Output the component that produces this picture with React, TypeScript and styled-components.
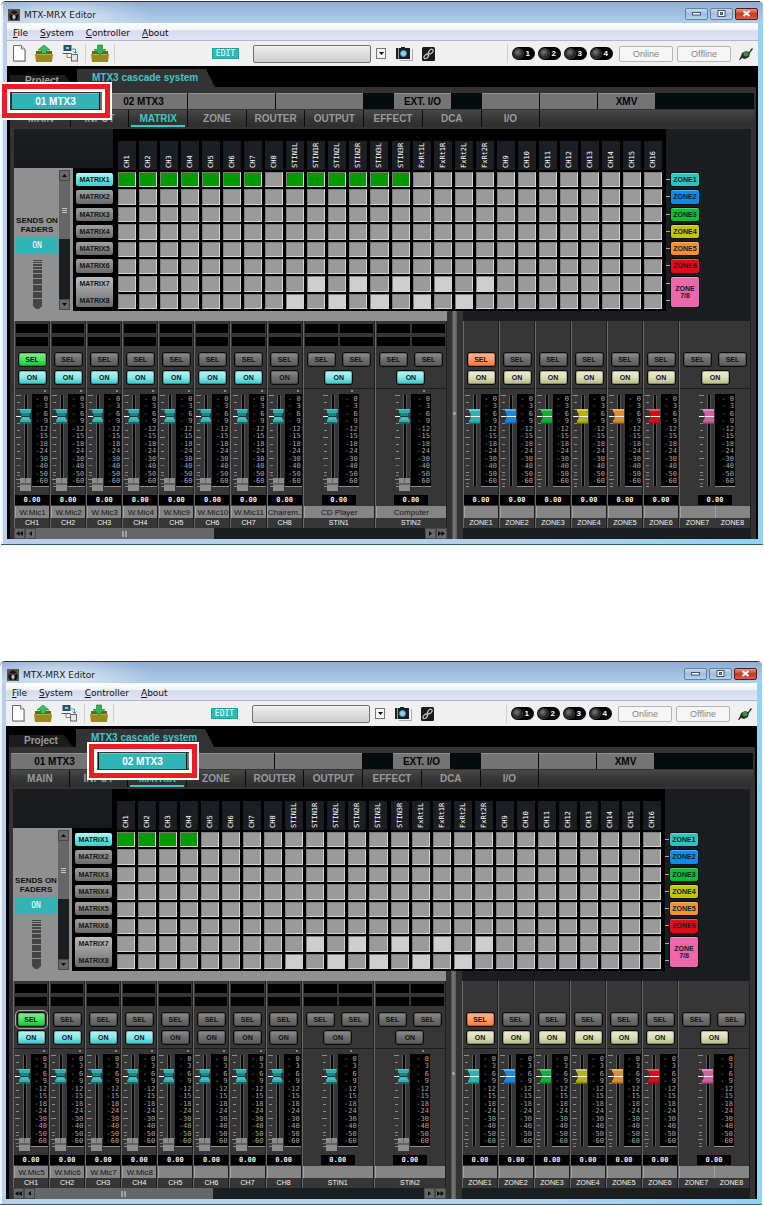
import React from "react";
import styled, { createGlobalStyle, css } from "styled-components";

const GlobalStyle = createGlobalStyle`
  * { box-sizing: border-box; }
  body { margin: 0; background: #fff; font-family: "Liberation Sans", Arial, sans-serif; }
  button { font-family: inherit; padding: 0; border: 0; margin: 0; cursor: pointer; }
`;

const sans = `"Liberation Sans", Arial, sans-serif`;
const mono = `"DejaVu Sans Mono", monospace`;
const ui = `"DejaVu Sans", Verdana, sans-serif`;
const teal = "#33b4b4";
const dark = "#1a1e20";
const gray = "#909090";

/* ---------- page and window frame ---------- */

const Page = styled.main`
  display: flex;
  flex-direction: column;
  gap: 116px;
  padding-top: 1px;
`;

const Frame = styled.section<{ $shift: boolean }>`
  margin: ${(p) => (p.$shift ? "0 2px 0 0" : "0 1px")};
  padding: 0 5px 5px 6px;
  border-top: 1px solid #30303c;
  border-bottom: 1px solid #2c6070;
  border-radius: 5px 5px 0 0;
  background: linear-gradient(90deg, #eef3fa 0, #eef3fa 2px, #b9cee8 2px, #b6d0ec 70%, #8fd4f2 100%);
`;

const TitleBar = styled.header`
  display: flex;
  align-items: center;
  height: 21px;
  margin: 0 -4px;
  padding: 4px 4px 0 5px;
  background:
    radial-gradient(ellipse 90px 22px at 60px 14px, rgba(255, 255, 255, 0.6), rgba(255, 255, 255, 0)),
    linear-gradient(#90aed3, #b0cdea);
  font: 9px/12px ${ui};
  color: #16202c;
`;

const AppTitle = styled.h1`
  flex: 1;
  margin: 0 0 0 4px;
  font: inherit;
`;

const WindowButtons = styled.div`
  display: flex;
  gap: 2px;
  padding-bottom: 2px;
`;

const WindowButton = styled.button<{ $close?: boolean }>`
  display: grid;
  place-items: center;
  width: 23px;
  height: 12px;
  border: 1px solid ${(p) => (p.$close ? "#5d1a14" : "#64809f")};
  border-radius: 2px;
  background: ${(p) =>
    p.$close ? "linear-gradient(#e09a8c, #c33b20 50%, #d6604a)" : "linear-gradient(#c6d9ee, #9fbcdc 50%, #b8d0ea)"};
`;

const MenuBar = styled.nav`
  display: flex;
  gap: 12px;
  height: 18px;
  padding: 2px 6px 0;
  border-bottom: 1px solid #b4b4c4;
  background: linear-gradient(#fff 0, #f0f3fb 40%, #d6dbf0 45%, #e0e4f5);
`;

const MenuItem = styled.button`
  background: none;
  font: 9px/12px ${ui};
  color: #111;
  &::first-letter { text-decoration: underline; }
`;

/* ---------- toolbar ---------- */

const Toolbar = styled.div`
  display: flex;
  align-items: center;
  height: 25px;
  padding: 0 5px 0 6px;
  background: #f0f0f0;
`;

const ToolGroup = styled.div<{ $gap: number; $pad?: number }>`
  display: flex;
  align-items: center;
  gap: ${(p) => p.$gap}px;
  padding-left: ${(p) => p.$pad ?? 0}px;
`;

const ToolButton = styled.button`
  display: block;
  background: none;
  svg { display: block; }
`;

const Separator = styled.span`
  width: 1px;
  height: 19px;
  background: #d0d0d0;
`;

const EditBadge = styled.span`
  width: 27px;
  height: 11px;
  margin-left: 97px;
  border: 1px dotted #0d8a8a;
  background: #2fb9b9;
  color: #fff;
  font: 8px/9px ${mono};
  text-align: center;
`;

const Preset = styled.select`
  appearance: none;
  width: 118px;
  height: 18px;
  margin-left: 14px;
  border: 1px solid #707070;
  border-radius: 2px;
  background: linear-gradient(#f2f2f2, #dcdcdc 50%, #cfcfcf);
`;

const DropButton = styled.button`
  display: grid;
  place-items: center;
  width: 10px;
  height: 11px;
  margin: 0 10px 0 5px;
  border: 1px solid #777;
  background: #f4f4f4;
`;

const Spacer = styled.span`
  flex: 1;
`;

const Led = styled.span`
  display: flex;
  align-items: center;
  justify-content: space-between;
  width: 23px;
  height: 13px;
  padding: 0 5px 0 2px;
  border-radius: 7px;
  background: #000;
  color: #fff;
  font: bold 8px/13px ${sans};
  &::before {
    content: "";
    width: 9px;
    height: 9px;
    border-radius: 50%;
    background: radial-gradient(circle at 40% 35%, #777, #222 70%);
    box-shadow: 0 0 0 1px #3a3a3a;
  }
`;

const LineButton = styled.button`
  width: 54px;
  height: 16px;
  border: 1px solid #b4b4b4;
  border-radius: 2px;
  background: #f6f6f6;
  color: #858585;
  font: 9px/14px ${sans};
`;

/* ---------- tabs ---------- */

const Body = styled.div`
  background: #000;
`;

const TabBar = styled.div`
  display: flex;
  align-items: flex-end;
  gap: 3px;
  height: 21px;
  padding-left: 3px;
`;

const Tab = styled.button<{ $active?: boolean }>`
  width: ${(p) => (p.$active ? 138 : 64)}px;
  height: ${(p) => (p.$active ? 18 : 12)}px;
  padding: 0 0 0 15px;
  text-align: left;
  white-space: nowrap;
  background: ${(p) => (p.$active ? "#333" : "#1c1c1c")};
  clip-path: polygon(0 0, calc(100% - 9px) 0, 100% 100%, 0 100%);
  color: ${(p) => (p.$active ? "#3cc8c4" : "#9a9a9a")};
  font: bold 10px/12px ${sans};
`;

const Panel = styled.div`
  margin: 0 2px 0 3px;
  padding-top: 6px;
  background: #333;
`;

const DeviceRow = styled.div`
  display: grid;
  grid-template-columns: repeat(4, 87fr) 29fr 57fr 29fr repeat(3, 57fr) 98fr;
  gap: 1px;
  height: 16px;
  margin: 0 2px 1px;
  background: #060b0b;
`;

const Device = styled.button<{ $active?: boolean }>`
  position: relative;
  border-top: 1px solid ${(p) => (p.$active ? "#5fd0d0" : "#909090")};
  background: ${(p) => (p.$active ? teal : "#747474")};
  color: ${(p) => (p.$active ? "#fff" : "#050505")};
  font: bold 10px/15px ${sans};
`;

const Callout = styled.span`
  position: absolute;
  z-index: 2;
  inset: -10px -11px -9px -10px;
  border: 5px solid #ec1c24;
  box-shadow: 0 0 0 2px #fff, inset 0 0 0 3px #fff;
`;

const NavRow = styled.nav`
  display: grid;
  grid-template-columns: repeat(9, 27fr) 100fr;
  gap: 1px;
  height: 17px;
  margin: 0 2px 2px;
  background: #0c0c0c;
`;

const NavItem = styled.button<{ $active?: boolean }>`
  display: flex;
  flex-direction: column;
  align-items: center;
  justify-content: space-between;
  background: linear-gradient(#484848, #343434 60%, #2e2e2e);
  color: ${(p) => (p.$active ? "#3cc8c4" : "#999")};
  font: bold 10px/17px ${sans};
  &::after {
    content: "";
    width: calc(100% - 4px);
    height: 2px;
    margin-top: -2px;
    background: ${(p) => (p.$active ? "#3cc8c4" : "transparent")};
  }
`;

/* ---------- matrix ---------- */

const Workspace = styled.div`
  margin: 0 5px 0 4px;
`;

const MatrixArea = styled.div`
  display: grid;
  grid-template-columns: 59px 41px minmax(0, 1fr) 85px;
  grid-template-rows: 39px 143px;
  background: ${dark};
`;

const Corner = styled.div`
  grid-column: 1 / 3;
  border-right: 1px solid #000;
  background: linear-gradient(${dark}, #171a1d);
`;

const SideBox = styled.aside`
  grid-area: 2 / 1;
  display: flex;
  background: ${gray};
`;

const SideMain = styled.div`
  flex: 1;
  display: flex;
  flex-direction: column;
  align-items: center;
  padding: 48px 0 0 1px;
  font: bold 8px/9px ${sans};
  text-align: center;
  white-space: nowrap;
  color: #111;
`;

const SendsOn = styled.button`
  width: 42px;
  height: 17px;
  margin: 3px 0 6px;
  background: ${teal};
  color: #fff;
  font: 8px/17px ${mono};
`;

const VScroll = styled.div`
  display: flex;
  flex-direction: column;
  width: 11px;
  margin: 2px 3px 1px 0;
  background: ${dark};
`;

const ArrowButton = styled.button`
  display: grid;
  place-items: center;
  width: 11px;
  height: 11px;
  border: 1px solid #484848;
  background: #686868;
`;

const VThumb = styled.div`
  display: grid;
  place-items: center;
  height: 58px;
  background: #666;
`;

const LabelColumn = styled.div`
  grid-area: 2 / 2;
  display: grid;
  grid-template-rows: repeat(8, minmax(0, 1fr));
  gap: 4px;
  padding: 5px 1px 4px 3px;
  background: #000;
`;

const MatrixLabel = styled.button<{ $active?: boolean; $double?: boolean }>`
  display: flex;
  flex-direction: column;
  justify-content: space-between;
  align-items: center;
  border-radius: 2px;
  background: ${(p) =>
    p.$active ? "linear-gradient(#b8f6f6, #58dede 60%, #48cccc)" : "linear-gradient(#a0a0a0, #6a6a6a)"};
  ${(p) => p.$double && css`grid-row: span 2; background: linear-gradient(#bcbcbc, #6c6c6c);`}
  color: #161616;
  font: bold 7px/13px ${sans};
`;

const GridColumn = styled.div`
  grid-area: 1 / 3 / 3 / 4;
  padding: 12px 4px 2px;
  background: #000;
`;

const HeaderRow = styled.div`
  display: grid;
  grid-template-columns: repeat(26, minmax(0, 1fr));
  gap: 3px;
  height: 29px;
  margin-bottom: 2px;
`;

const HeaderCell = styled.span`
  display: flex;
  align-items: center;
  justify-content: flex-start;
  writing-mode: vertical-rl;
  transform: rotate(180deg);
  padding-top: 2px;
  background: #1b1e22;
  color: #fff;
  font: 7px/9px ${mono};
`;

const Cells = styled.div`
  display: grid;
  grid-template-columns: repeat(26, minmax(0, 1fr));
  grid-template-rows: repeat(8, 1fr);
  gap: 2px 3px;
  height: 137px;
`;

const Cell = styled.button<{ $kind: "on" | "off" | "light" }>`
  border: 1px solid;
  border-color: #7c7c7c #d4d4d4 #d4d4d4 #7c7c7c;
  background: ${(p) => ({ on: "#009a00", off: "#9a9a9a", light: "#cecece" })[p.$kind]};
`;

const ZoneColumn = styled.div`
  grid-area: 2 / 4;
  display: grid;
  grid-template-columns: 5px 28px;
  grid-template-rows: repeat(8, minmax(0, 1fr));
  align-items: center;
  row-gap: 4px;
  padding: 5px 0 4px;
`;

const Lead = styled.span`
  grid-column: 1;
  width: 4px;
  height: 1px;
  background: #aaa;
`;

const ZonePill = styled.button<{ $color: string; $double?: boolean }>`
  grid-column: 2;
  align-self: stretch;
  ${(p) => p.$double && css`grid-row: 7 / 9;`}
  border-radius: 2px;
  background: ${(p) => p.$color};
  box-shadow: inset 0 1px 0 rgba(255, 255, 255, 0.3), 0 0 0 1px #0c0f10;
  color: #10202a;
  font: bold 7px/7px ${sans};
  white-space: pre-line;
`;

/* ---------- channel strips ---------- */

const Mixer = styled.div`
  display: grid;
  grid-template-columns: minmax(0, 433fr) 16px minmax(0, 288fr);
`;

const Side = styled.div<{ $top: string }>`
  border-top: 10px solid ${(p) => p.$top};
`;

const Strips = styled.div<{ $units: number }>`
  display: grid;
  grid-template-columns: repeat(${(p) => p.$units}, minmax(0, 1fr));
`;

const Divider = styled.div`
  display: grid;
  place-items: center;
  margin: 0 6px 0 5px;
  background: linear-gradient(90deg, #4a4a4a, #7a7a7a 40%, #5a5a5a);
  &::before {
    content: "";
    width: 3px;
    height: 3px;
    margin-bottom: 24px;
    border-radius: 50%;
    background: #aaa;
  }
`;

const StripBox = styled.section<{ $wide: boolean }>`
  grid-column: span ${(p) => (p.$wide ? 2 : 1)};
  display: flex;
  flex-direction: column;
  align-items: center;
  border-left: 1px solid #686868;
  border-right: 1px solid #1e1e1e;
  background: #363636;
`;

const Split = styled.div<{ $height: number; $top: number }>`
  display: flex;
  align-items: stretch;
  justify-content: center;
  width: 100%;
  height: ${(p) => p.$height}px;
  margin-top: ${(p) => p.$top}px;
`;

const Half = styled.div`
  flex: 1;
  display: flex;
  flex-direction: column;
  align-items: center;
`;

const MeterBox = styled.div`
  width: calc(100% - 2px);
  height: 9px;
  margin-top: 4px;
  background: #000;
  &:first-child { margin-top: 3px; }
`;

const keyTones = {
  off: "linear-gradient(#8e8e8e, #6c6c6c 50%, #5c5c5c)",
  green: "linear-gradient(#86f08a, #4fe068 50%, #0cc83c)",
  cyan: "linear-gradient(#b4f4f4, #8ce8e8 50%, #30c4c8)",
  orange: "linear-gradient(#ffb48c, #ff9c6c 50%, #f87838)",
  cream: "linear-gradient(#ecedcf, #dcdeb8 50%, #b4ba82)",
};
type Tone = keyof typeof keyTones;

const KeyButton = styled.button<{ $tone: Tone; $framed?: boolean }>`
  width: 29px;
  height: 15px;
  border: 1px solid #0a0a0a;
  border-radius: 3px;
  box-shadow: inset 0 0 0 1px rgba(0, 0, 0, 0.25);
  outline: ${(p) => (p.$framed ? "1px solid #a8a8a8" : "none")};
  outline-offset: 1px;
  background: ${(p) => keyTones[p.$tone]};
  color: #141414;
  font: bold 7px/13px ${sans};
`;

const Rule = styled.hr`
  width: 100%;
  height: 1px;
  margin: 3px 0 0;
  border: 0;
  background: #1c1c1c;
`;

const FaderBox = styled.div`
  display: grid;
  width: 34px;
  height: 104px;
  & > * { grid-area: 1 / 1; }
`;

const Knob = styled.input<{ $color: string; $waist: boolean }>`
  appearance: none;
  writing-mode: vertical-lr;
  direction: rtl;
  width: 11px;
  height: 104px;
  margin: 0 0 0 5px;
  background: transparent;
  &::-webkit-slider-runnable-track { width: 11px; background: transparent; }
  &::-webkit-slider-thumb {
    appearance: none;
    width: 11px;
    height: 15px;
    background: ${(p) =>
      p.$waist
        ? `linear-gradient(rgba(255,255,255,.25) 0 1px, transparent 1px 4px, rgba(0,0,0,.25) 4px 7px, #0c3c3c 7px 8px, rgba(255,255,255,.15) 8px 11px, transparent 11px 13px, rgba(0,0,0,.4) 13px), ${p.$color}`
        : `linear-gradient(rgba(255,255,255,.3) 0 2px, transparent 2px 7px, #fff 7px 8px, transparent 8px 12px, rgba(0,0,0,.35)), ${p.$color}`};
    clip-path: ${(p) =>
      p.$waist
        ? "polygon(0 0, 100% 0, 100% 24%, 86% 34%, 86% 66%, 100% 76%, 100% 100%, 0 100%, 0 76%, 14% 66%, 14% 34%, 0 24%)"
        : "polygon(0 0, 100% 0, 100% 100%, 0 100%, 0 80%, 14% 68%, 14% 32%, 0 20%)"};
  }
`;

const Scale = styled.div<{ $wide: boolean }>`
  display: flex;
  flex-direction: column;
  justify-content: space-between;
  width: ${(p) => (p.$wide ? 20 : 17)}px;
  height: 93px;
  margin: 5px 0 0 17px;
  padding: 2px 1px 1px 0;
  border-bottom: 1px solid #8a8a8a;
  background: #000;
  color: #a8a8a8;
  font: 7px/7px ${mono};
  text-align: right;
  white-space: pre;
`;

const Value = styled.output`
  width: 34px;
  height: 10px;
  margin-top: 2px;
  background: #000;
  color: #eee;
  font: bold 7px/10px ${mono};
  text-align: center;
`;

const NameBox = styled.span`
  flex: 1;
  height: 12px;
  border-left: 1px solid #a4a4a4;
  background: #858585;
  color: #141414;
  font: 8px/13px ${sans};
  text-align: center;
  white-space: nowrap;
`;

const ChannelName = styled.span`
  flex: 1;
  color: #f4f4f4;
  font: 7px/10px ${sans};
  text-align: center;
`;

const HScroll = styled.div`
  display: flex;
  height: 11px;
  background: ${dark};
`;

const HThumb = styled.div`
  display: grid;
  place-items: center;
  width: 41%;
  background: #666;
`;

/* ---------- drawings ---------- */

const AppIcon = () => (
  <svg width="12" height="12" viewBox="0 0 12 12">
    <rect width="12" height="12" fill="#5a5450" />
    <path d="M6 1l4 2.500-4 2-4-2z" fill="#1a1818" />
    <path d="M1.500 4.500L5 6.500v4.500H3l-1.500-2zM10.500 4.500L7 6.500v4.500h2l1.500-2z" fill="#111" />
    <path d="M4.500 7L6 5.800 7.500 7v2.500h-3z" fill="#c8c4c0" />
  </svg>
);

const NewIcon = () => (
  <svg width="13" height="17" viewBox="0 0 13 17">
    <path d="M.5.500h8l3.500 3.500v12H.5z" fill="#fff" stroke="#666" />
    <path d="M8.500.500V4H12" fill="#e8e8e8" stroke="#777" />
    <path d="M1 16.500h11.500V5" fill="none" stroke="#999" />
  </svg>
);

const FolderIcon = ({ down }: { down?: boolean }) => (
  <svg width="18" height="19" viewBox="0 0 18 19">
    <path d="M1 7h5l1-1h4l1 1h5v10H1z" fill="#6f6410" />
    <path d="M0 10h18l-1 8H1z" fill="#988a1e" />
    <path d="M1 10.500h16" stroke="#b8ab48" />
    {down ? (
      <path d="M6.500 1h5v4.500h3.500L9 11 3 5.500h3.500z" fill="#2db455" stroke="#0e7a30" strokeWidth=".6" />
    ) : (
      <path d="M9 1l6 5h-3.500v3.500h-5V6H3z" fill="#3cc05c" stroke="#0e8036" strokeWidth=".6" />
    )}
  </svg>
);

const NetworkIcon = () => (
  <svg width="17" height="17" viewBox="0 0 17 17">
    <rect x="2" y=".5" width="7" height="5" fill="#1c5c88" stroke="#444" />
    <rect x="4" y="2" width="3" height="2" fill="#6fd0f0" />
    <path d="M.5 8.500h9" stroke="#555" />
    <path d="M10 4h3.500v4M13.500 8.500l-2-2M13.500 8.500l2-2" fill="none" stroke="#30a0b0" />
    <path d="M5 9v3.500h4" fill="none" stroke="#888" />
    <rect x="9.500" y="9.500" width="6" height="6.500" fill="#e4e8e8" stroke="#666" />
  </svg>
);

const CameraIcon = () => (
  <svg width="17" height="14" viewBox="0 0 17 14">
    <path d="M4 13.500h12.500V2" fill="none" stroke="#aaa" />
    <rect y="1" width="14" height="11" fill="#1c1e20" />
    <path d="M2.500 1v11" stroke="#999" />
    <rect x="5" y="0" width="4" height="2" fill="#1c1e20" />
    <circle cx="7.500" cy="6.500" r="3" fill="#8cd0ec" stroke="#3a98c8" />
  </svg>
);

const LinkIcon = () => (
  <svg width="13" height="14" viewBox="0 0 13 14">
    <rect width="13" height="14" rx="1.500" fill="#1a1a1a" />
    <ellipse cx="8.800" cy="4.600" rx="2.800" ry="1.700" transform="rotate(-45 8.800 4.600)" fill="none" stroke="#ccc" strokeWidth="1.100" />
    <ellipse cx="4.300" cy="9.300" rx="2.800" ry="1.700" transform="rotate(-45 4.300 9.300)" fill="none" stroke="#ccc" strokeWidth="1.100" />
    <path d="M5 8.500L8 5.500" stroke="#ccc" />
  </svg>
);

const PlugIcon = () => (
  <svg width="14" height="14" viewBox="0 0 14 14">
    <path d="M0 13l2-4 1-3 4-2 3 1 3-4 1 1-3 4-1 4-4 2-3-1-2 2z" fill="#2c2c2c" />
    <circle cx="7" cy="7" r="2.500" fill="#2f9a2c" />
  </svg>
);

const Arrow = ({ d }: { d: string }) => (
  <svg width="7" height="7" viewBox="0 0 7 7">
    <path d={d} fill="#0a0a0a" />
  </svg>
);

const SendsIcon = () => (
  <svg width="9" height="50" viewBox="0 0 9 50">
    {[
      [0, 1], [2, 1], [4, 2], [7, 2], [10, 3], [14, 4], [19, 5], [25, 6], [32, 6],
    ].map(([y, h]) => (
      <rect key={y} x="0" y={y} width="9" height={h} fill="#444" />
    ))}
    <path d="M0 39h9v7l-3 3H3l-3-3z" fill="#444" />
  </svg>
);

const FaderTicks = ({ rest }: { rest: boolean }) => (
  <svg width="34" height="104" viewBox="0 0 34 104" shapeRendering="crispEdges">
    {Array.from({ length: 14 }, (_, i) => (
      <rect key={i} x={i % 3 === 0 ? 1 : 2} y={6 + i * 7} width={i % 3 === 0 ? 5 : 3} height="1" fill="#8c8c8c" />
    ))}
    {[76, 86, 94].map((y) => (
      <rect key={y} x="2" y={y} width="3" height="1" fill="#777" />
    ))}
    <rect x="9" y="6" width="1" height="91" fill="#5c5c5c" />
    <rect x="10" y="6" width="2" height="91" fill="#060606" />
    <rect x="12" y="6" width="1" height="91" fill="#555" />
    <rect x="1" y="27" width="5" height="1" fill="#fff" />
    {rest && (
      <>
        <rect x="5" y="89" width="11" height="13" fill="#8c8c8c" />
        <rect x="5" y="94" width="11" height="2" fill="#606060" />
        <rect x="10" y="89" width="1" height="5" fill="#666" />
        <circle cx="30" cy="2" r="1" fill="none" stroke="#888" />
      </>
    )}
  </svg>
);

/* ---------- data ---------- */

const sources = [
  "CH1", "CH2", "CH3", "CH4", "CH5", "CH6", "CH7", "CH8",
  "STIN1L", "STIN1R", "STIN2L", "STIN2R", "STIN3L", "STIN3R",
  "FxRt1L", "FxRt1R", "FxRt2L", "FxRt2R",
  "CH9", "CH10", "CH11", "CH12", "CH13", "CH14", "CH15", "CH16",
];
const navItems = ["MAIN", "INPUT", "MATRIX", "ZONE", "ROUTER", "OUTPUT", "EFFECT", "DCA", "I/O"];
const zoneColors = ["#30c4c0", "#0c8cf0", "#08c030", "#c4c40c", "#f89030", "#e00c18", "#ec68a8"];
const knobColors = ["#2cb4b4", "#1888e0", "#10b030", "#b4b40c", "#e08c30", "#d80c1c", "#d060a0"];
const levels = ["- 0", "- 3", "- 6", "- 9", "-12", "-15", "-18", "-24", "-30", "-40", "-50", "-60"];

interface StripData {
  channels: string[];
  names: string[];
  on: Tone;
  sel: Tone;
  framed?: boolean;
}

interface WindowData {
  activeDevice: number;
  activeCells: number[];
  names: string[];
  litStrips: number[];
}

const windows: WindowData[] = [
  {
    activeDevice: 0,
    activeCells: [0, 1, 2, 3, 4, 5, 6, 8, 9, 10, 11, 12, 13],
    names: ["W.Mic1", "W.Mic2", "W.Mic3", "W.Mic4", "W.Mic9", "W.Mic10", "W.Mic11", "Chairem..", "CD Player", "Computer"],
    litStrips: [0, 1, 2, 3, 4, 5, 6, 8, 9],
  },
  {
    activeDevice: 1,
    activeCells: [0, 1, 2, 3],
    names: ["W.Mic5", "W.Mic6", "W.Mic7", "W.Mic8", "", "", "", "", "", ""],
    litStrips: [0, 1, 2, 3],
  },
];

const inputLabels = ["CH1", "CH2", "CH3", "CH4", "CH5", "CH6", "CH7", "CH8", "STIN1", "STIN2"];

const cellKind = (row: number, col: number, active: number[]) => {
  if (row === 0 && active.includes(col)) return "on";
  if (col >= 8 && col < 18 && ((row === 6 && col % 2 === 1) || (row === 7 && col % 2 === 0))) return "light";
  return "off";
};

/* ---------- components ---------- */

const Strip = ({ data, wide, color, zone }: { data: StripData; wide: boolean; color: string; zone?: boolean }) => {
  const halves = wide ? [0, 1] : [0];
  const title = data.channels.join("/");
  return (
    <StripBox $wide={wide} aria-label={title}>
      <Split $height={25} $top={0}>
        {!zone && halves.map((h) => (
          <Half key={h}>
            <MeterBox />
            <MeterBox />
          </Half>
        ))}
      </Split>
      <Split $height={15} $top={6}>
        {halves.map((h) => (
          <Half key={h}>
            <KeyButton $tone={h === 0 ? data.sel : "off"} $framed={data.framed}>SEL</KeyButton>
          </Half>
        ))}
      </Split>
      <Split $height={15} $top={3}>
        <KeyButton $tone={data.on}>ON</KeyButton>
      </Split>
      <Rule />
      <FaderBox>
        <FaderTicks rest={!zone} />
        <Scale $wide={wide}>{levels.map((l) => <span key={l}>{l}</span>)}</Scale>
        <Knob type="range" min={0} max={100} defaultValue={78} aria-label={`${title} level`} $color={color} $waist={!zone} />
      </FaderBox>
      <Value>0.00</Value>
      <Split $height={12} $top={1}>
        {data.names.map((n, i) => <NameBox key={i}>{n}</NameBox>)}
      </Split>
      <Split $height={10} $top={0}>
        {data.channels.map((c) => <ChannelName key={c}>{c}</ChannelName>)}
      </Split>
    </StripBox>
  );
};

const MatrixView = ({ data }: { data: WindowData }) => (
  <MatrixArea>
    <Corner />
    <SideBox>
      <SideMain>
        SENDS ON
        <br />
        FADERS
        <SendsOn>ON</SendsOn>
        <SendsIcon />
      </SideMain>
      <VScroll>
        <ArrowButton aria-label="Scroll up"><Arrow d="M1 5h5L3.500 2z" /></ArrowButton>
        <VThumb>
          <svg width="5" height="5" viewBox="0 0 5 5"><path d="M0 .5h5M0 2.500h5M0 4.500h5" stroke="#c4c4c4" /></svg>
        </VThumb>
        <Spacer />
        <ArrowButton aria-label="Scroll down"><Arrow d="M1 2h5L3.500 5z" /></ArrowButton>
      </VScroll>
    </SideBox>
    <LabelColumn>
      {[1, 2, 3, 4, 5, 6].map((n) => (
        <MatrixLabel key={n} $active={n === 1}>MATRIX{n}</MatrixLabel>
      ))}
      <MatrixLabel $double>
        <span>MATRIX7</span>
        <span>MATRIX8</span>
      </MatrixLabel>
    </LabelColumn>
    <GridColumn>
      <HeaderRow>{sources.map((s) => <HeaderCell key={s}>{s}</HeaderCell>)}</HeaderRow>
      <Cells>
        {Array.from({ length: 8 }, (_, row) =>
          sources.map((s, col) => (
            <Cell key={`${row}${s}`} aria-label={`${s} to MATRIX${row + 1}`} $kind={cellKind(row, col, data.activeCells)} />
          )),
        )}
      </Cells>
    </GridColumn>
    <ZoneColumn>
      {zoneColors.map((c, i) => (
        <React.Fragment key={c}>
          <Lead />
          <ZonePill $color={c} $double={i === 6}>{i === 6 ? "ZONE\n7/8" : `ZONE${i + 1}`}</ZonePill>
        </React.Fragment>
      ))}
      <Lead />
    </ZoneColumn>
  </MatrixArea>
);

const EditorWindow = ({ data, shift }: { data: WindowData; shift: boolean }) => (
  <Frame $shift={shift}>
    <TitleBar>
      <AppIcon />
      <AppTitle>MTX-MRX Editor</AppTitle>
      <WindowButtons>
        <WindowButton aria-label="Minimize">
          <svg width="9" height="4"><rect x=".5" y=".5" width="8" height="2.500" fill="#fff" stroke="#44546a" /></svg>
        </WindowButton>
        <WindowButton aria-label="Maximize">
          <svg width="9" height="7"><rect x="1" y=".5" width="7" height="6" fill="#fff" stroke="#44546a" /><rect x="3.500" y="2.500" width="2" height="2" fill="#8aa" stroke="#44546a" /></svg>
        </WindowButton>
        <WindowButton aria-label="Close" $close>
          <svg width="9" height="7"><path d="M1.500 1l6 5M7.500 1l-6 5" stroke="#fff" strokeWidth="2" /></svg>
        </WindowButton>
      </WindowButtons>
    </TitleBar>
    <MenuBar>
      {["File", "System", "Controller", "About"].map((m) => <MenuItem key={m}>{m}</MenuItem>)}
    </MenuBar>
    <Toolbar>
      <ToolGroup $gap={9}>
        <ToolButton aria-label="New"><NewIcon /></ToolButton>
        <ToolButton aria-label="Open"><FolderIcon /></ToolButton>
        <ToolButton aria-label="Network"><NetworkIcon /></ToolButton>
      </ToolGroup>
      <ToolGroup $gap={5} $pad={6}>
        <Separator />
        <ToolButton aria-label="Save"><FolderIcon down /></ToolButton>
        <Separator />
      </ToolGroup>
      <EditBadge>EDIT</EditBadge>
      <Preset aria-label="Preset"><option></option></Preset>
      <DropButton aria-label="Show presets"><Arrow d="M1 2h5L3.500 5z" /></DropButton>
      <ToolGroup $gap={9}>
        <ToolButton aria-label="Snapshot"><CameraIcon /></ToolButton>
        <ToolButton aria-label="Link"><LinkIcon /></ToolButton>
      </ToolGroup>
      <Spacer />
      <Separator />
      <ToolGroup $gap={3} $pad={4}>
        {[1, 2, 3, 4].map((n) => <Led key={n}>{n}</Led>)}
      </ToolGroup>
      <ToolGroup $gap={4} $pad={6}>
        <LineButton>Online</LineButton>
        <LineButton>Offline</LineButton>
      </ToolGroup>
      <ToolGroup $gap={0} $pad={8}>
        <ToolButton aria-label="Connection"><PlugIcon /></ToolButton>
      </ToolGroup>
    </Toolbar>
    <Body>
      <TabBar>
        <Tab>Project</Tab>
        <Tab $active>MTX3 cascade system</Tab>
      </TabBar>
      <Panel>
        <DeviceRow>
          {["01 MTX3", "02 MTX3", "", ""].map((d, i) => (
            <Device key={i} $active={i === data.activeDevice}>
              {d}
              {i === data.activeDevice && <Callout />}
            </Device>
          ))}
          <span />
          <Device>EXT. I/O</Device>
          <span />
          <Device aria-label="Empty slot" />
          <Device aria-label="Empty slot" />
          <Device>XMV</Device>
        </DeviceRow>
        <NavRow>
          {navItems.map((n) => <NavItem key={n} $active={n === "MATRIX"}>{n}</NavItem>)}
          <NavItem as="span" />
        </NavRow>
        <Workspace>
          <MatrixView data={data} />
          <Mixer>
            <Side $top={gray}>
              <Strips $units={12}>
                {inputLabels.map((c, i) => (
                  <Strip
                    key={c}
                    wide={i > 7}
                    color="#2ab0b0"
                    data={{
                      channels: [c],
                      names: [data.names[i]],
                      on: data.litStrips.includes(i) ? "cyan" : "off",
                      sel: i === 0 ? "green" : "off",
                      framed: shift && i === 0,
                    }}
                  />
                ))}
              </Strips>
              <HScroll>
                <ArrowButton aria-label="First"><Arrow d="M3.500 1v5L0 3.500zM7 1v5L3.500 3.500z" /></ArrowButton>
                <ArrowButton aria-label="Left"><Arrow d="M5 1v5L2 3.500z" /></ArrowButton>
                <HThumb>
                  <svg width="5" height="6" viewBox="0 0 5 6"><path d="M1 0v6M4 0v6" stroke="#ddd" /></svg>
                </HThumb>
                <Spacer />
                <ArrowButton aria-label="Right"><Arrow d="M2 1v5l3-2.500z" /></ArrowButton>
                <ArrowButton aria-label="Last"><Arrow d="M0 1v5l3.500-2.500zM3.500 1v5L7 3.500z" /></ArrowButton>
              </HScroll>
            </Side>
            <Divider />
            <Side $top={dark}>
              <Strips $units={8}>
                {knobColors.map((color, i) => (
                  <Strip
                    key={color}
                    zone
                    wide={i === 6}
                    color={color}
                    data={{
                      channels: i === 6 ? ["ZONE7", "ZONE8"] : [`ZONE${i + 1}`],
                      names: i === 6 ? ["", ""] : [""],
                      on: "cream",
                      sel: i === 0 ? "orange" : "off",
                    }}
                  />
                ))}
              </Strips>
              <HScroll />
            </Side>
          </Mixer>
        </Workspace>
      </Panel>
    </Body>
  </Frame>
);

export default function App() {
  return (
    <>
      <GlobalStyle />
      <Page>
        {windows.map((w, i) => <EditorWindow key={i} data={w} shift={i === 1} />)}
      </Page>
    </>
  );
}
